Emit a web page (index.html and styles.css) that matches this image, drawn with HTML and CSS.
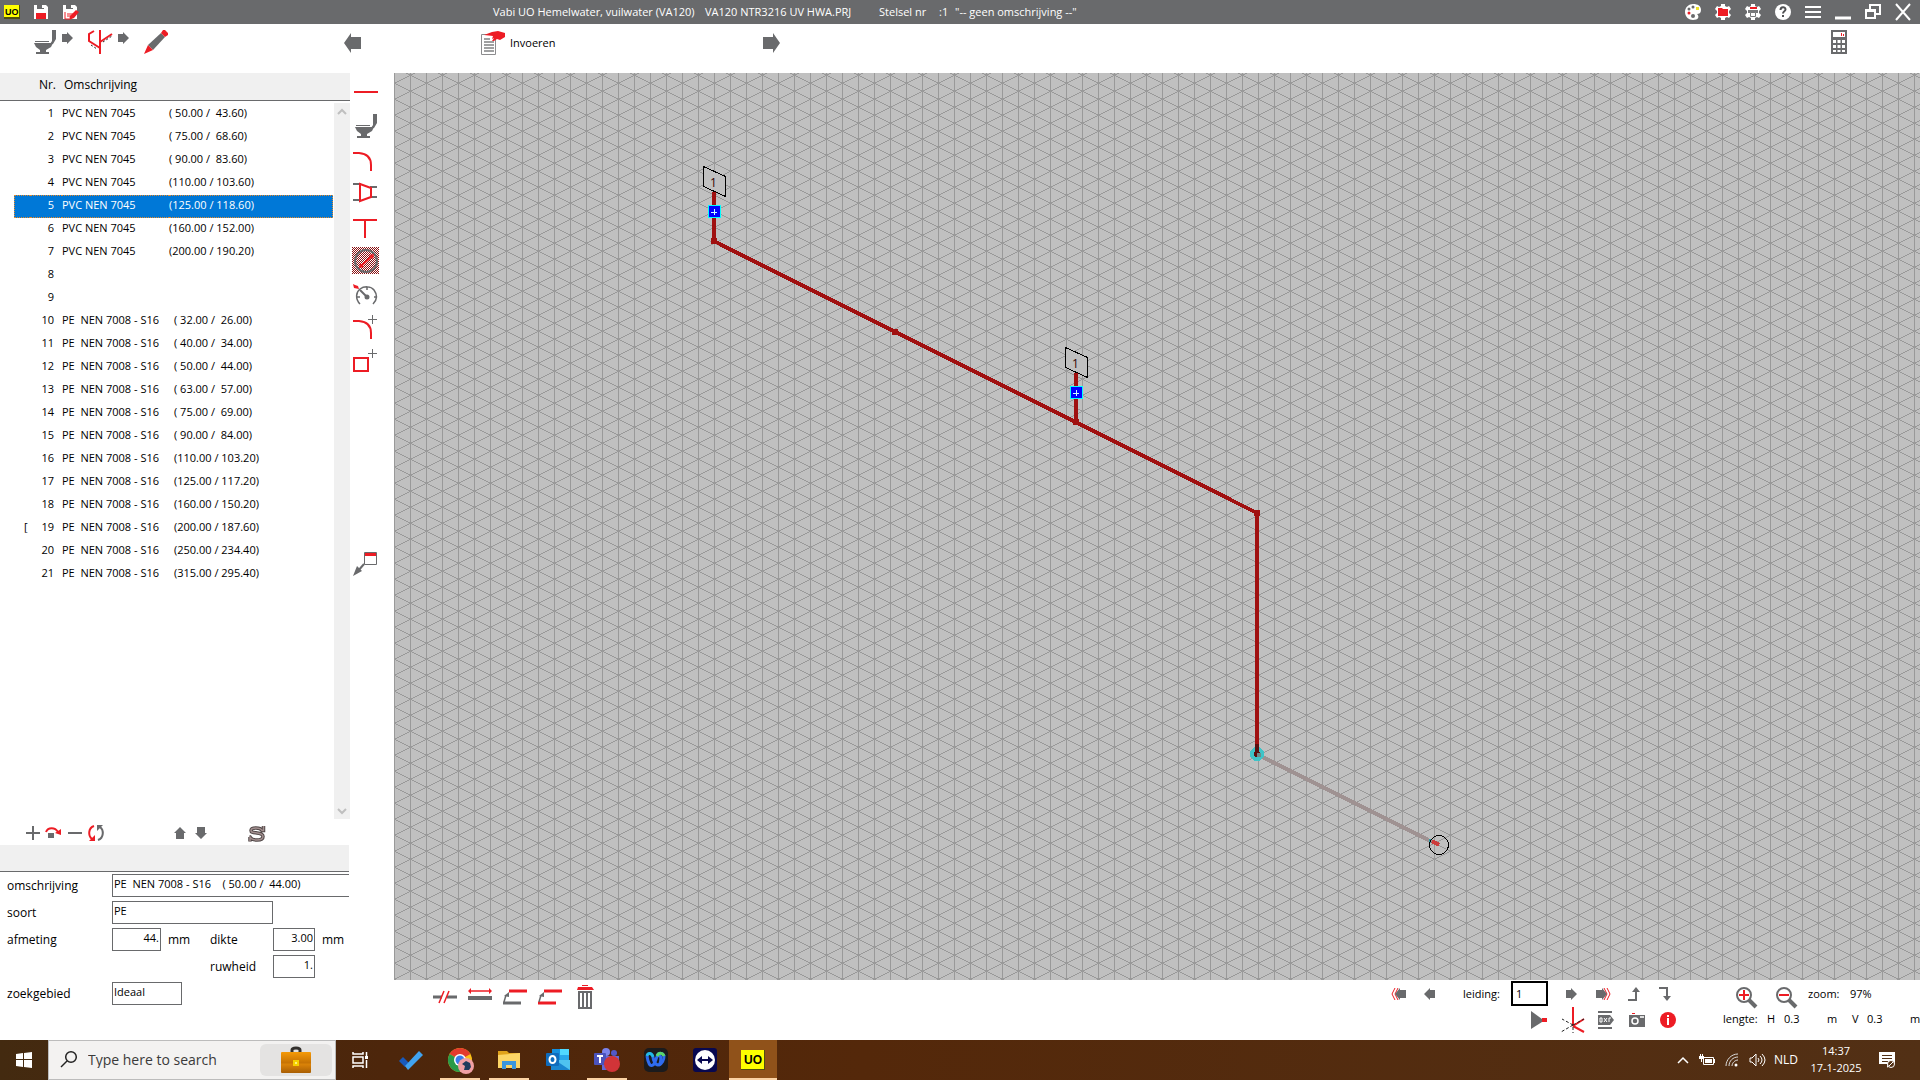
FILE: index.html
```html
<!DOCTYPE html>
<html lang="nl">
<head>
<meta charset="utf-8">
<title>Vabi UO Hemelwater, vuilwater (VA120)</title>
<link rel="stylesheet" href="styles.css">
</head>
<body>
<svg class="defs" width="0" height="0" aria-hidden="true">
  <symbol id="toilet" viewBox="0 0 22 24"><path d="M18 0h4v9l-3 5-3 1v-1l2-3zM1 11h14v1H1zM0 13h19l-2 4-5 3v2h3v2H2v-2h4v-2l-4-3z" fill="#696a6c"/></symbol>
  <symbol id="step" viewBox="0 0 11 12"><path d="M0 2h5V0l6 6-6 6v-2H0z" fill="#696a6c"/></symbol>
  <symbol id="big" viewBox="0 0 17 20"><path d="M0 4h10V0l7 10-7 10v-4H0z" fill="#696a6c"/></symbol>
</svg>

<header class="titlebar">
  <div class="title-left">
    <svg class="uo" width="16" height="14"><rect width="16" height="14" fill="#504f10"/><rect width="15" height="12" fill="#ff0"/><text x="1" y="10" class="uo-text">UO</text></svg>
    <button aria-label="Opslaan"><svg width="16" height="16"><path d="M1 1h3v4h7V1h2l2 2v12H1z" fill="#fff"/><path d="M9 1h2v3H9z" fill="#fff"/><path d="M3 9h10v6H3z" fill="#ed1c24"/></svg></button>
    <button aria-label="Opslaan als"><svg width="18" height="16"><path d="M1 1h3v4h7V1h2l2 2v12H1z" fill="#fff"/><path d="M9 1h2v3H9zM4 9h8v6H4z" fill="#fff"/><path d="M3 8v7h4M5 10h6M5 12h4" stroke="#ed1c24" fill="none"/><path d="M7 16l1-4 6-6 3 2-5 6z" fill="#ed1c24"/></svg></button>
  </div>
  <h1 class="title"><span class="app-name">Vabi UO Hemelwater, vuilwater (VA120)</span><span class="file-name">VA120 NTR3216 UV HWA.PRJ</span><span class="system">Stelsel nr</span><span>:1</span><span>"-- geen omschrijving --"</span></h1>
  <div class="title-right">
    <button aria-label="Kleuren"><svg width="16" height="16"><path d="M8 0c5 0 8 2 8 6 0 3-2 4-4 4 3 3 1 6-4 6-4 0-8-3-8-8s4-8 8-8z" fill="#fff"/><circle cx="4" cy="5" r="1.500" fill="#696a6c"/><circle cx="8" cy="3" r="1.500" fill="#696a6c"/><path d="M11 3h3v3h-3z" fill="#efe12b"/><circle cx="4" cy="9" r="1.500" fill="#ed1c24"/><circle cx="8" cy="12" r="2" fill="#696a6c"/></svg></button>
    <button aria-label="Mapinstellingen"><svg width="16" height="16"><path d="M6 0h4v2l2 1 2-1 2 3-2 2v2l2 2-2 3-2-1-2 1v2H6v-2l-2-1-2 1-2-3 2-2V7L0 5l2-3 2 1 2-1z" fill="#fff"/><path d="M3 4h4l1 1h5v7H3z" fill="#ed1c24"/></svg></button>
    <button aria-label="Printinstellingen"><svg width="16" height="16"><path d="M6 0h4v2l2 1 2-1 2 3-2 2v2l2 2-2 3-2-1-2 1v2H6v-2l-2-1-2 1-2-3 2-2V7L0 5l2-3 2 1 2-1z" fill="#fff"/><path d="M5 3h7v2H5z" fill="#ed1c24"/><path d="M3 6h10v3H3z" fill="#77787a"/><path d="M5.500 8.500h5v4h-5z" fill="#fff" stroke="#77787a"/></svg></button>
    <button aria-label="Help"><svg width="16" height="16"><circle cx="8" cy="8" r="8" fill="#fff"/><path d="M5.500 6c0-3.500 5-3.500 5-.5 0 2-2.500 1.500-2.500 4M8 11v2" fill="none" stroke="#505153" stroke-width="2"/></svg></button>
    <button aria-label="Menu"><svg width="16" height="12"><path d="M0 1h16M0 6h16M0 11h16" stroke="#fff" stroke-width="2"/></svg></button>
    <button aria-label="Minimaliseren"><svg width="16" height="16"><path d="M0 14h16" stroke="#fff" stroke-width="3"/></svg></button>
    <button aria-label="Herstellen"><svg width="16" height="16"><path d="M5 6V1h10v9h-4" stroke="#fff" stroke-width="2" fill="none"/><path d="M1 6h9v8H1zM0 7h11" stroke="#fff" stroke-width="2" fill="none"/></svg></button>
    <button aria-label="Sluiten"><svg width="16" height="16"><path d="M1 0l14 16M15 0L1 16" stroke="#fff" stroke-width="2"/></svg></button>
  </div>
</header>

<nav class="toolbar">
  <div class="steps">
    <button aria-label="Toestellen"><svg width="22" height="24"><use href="#toilet"/></svg></button>
    <svg class="chev" width="11" height="12"><use href="#step"/></svg>
    <button aria-label="Leidingnet"><svg width="24" height="24"><path d="M12 0v24M6 1L1 4v7l11 7M12 12l12-8" fill="none" stroke="#ed1c24" stroke-width="2"/><path d="M3 15l6 4M15 12l9-6" stroke="#222" stroke-dasharray="2 2"/></svg></button>
    <svg class="chev" width="11" height="12"><use href="#step"/></svg>
    <button aria-label="Bewerken"><svg width="24" height="24"><path d="M4 15L17 3l4 4L9 20z" fill="#696a6c"/><path d="M17 3l2-3h2l3 3v2l-3 2zM4 15l5 5-9 4z" fill="#ed1c24"/></svg></button>
  </div>
  <div class="phase">
    <button aria-label="Vorige"><svg class="flip" width="17" height="20"><use href="#big"/></svg></button>
    <button class="phase-name"><svg width="24" height="24"><path d="M.5 3.500h14v20H.5z" fill="#fff" stroke="#8c8c8e"/><path d="M3 8h6M3 11h10M3 14h10M3 17h10M3 20h10" stroke="#808183" stroke-width="1.500"/><path d="M3 4l8-3 6-1 7 2v4l-5 3-3-1-3 2h-2l2-3-2 1 1-3z" fill="#ed1c24"/></svg>Invoeren</button>
    <button aria-label="Volgende"><svg width="17" height="20"><use href="#big"/></svg></button>
  </div>
  <button class="calc" aria-label="Berekenen"><svg width="16" height="24"><path d="M0 0h16v24H0z" fill="#696a6c"/><path d="M2 2h12v5H2zM2 10h3v3H2zM6.500 10h3v3h-3zM11 10h3v3h-3zM2 15h3v3H2zM6.500 15h3v3h-3zM11 15h3v3h-3zM2 20h3v2H2zM6.500 20h3v2h-3zM11 20h3v2h-3z" fill="#fff"/><path d="M10.500 3v3M12.500 4v2" stroke="#ed1c24"/></svg></button>
</nav>

<main class="work">
  <aside class="side">
    <div class="list">
      <table>
        <colgroup><col class="c-pad"><col class="c-mark"><col class="c-nr"><col class="c-type"><col><col class="c-bar"></colgroup>
        <thead><tr><th></th><th></th><th class="nr">Nr.</th><th class="name" colspan="3">Omschrijving</th></tr></thead>
        <tbody>
          <tr><td></td><td></td><td class="nr">1</td><td>PVC NEN 7045</td><td>( 50.00 /&nbsp; 43.60)</td><td></td></tr>
          <tr><td></td><td></td><td class="nr">2</td><td>PVC NEN 7045</td><td>( 75.00 /&nbsp; 68.60)</td><td></td></tr>
          <tr><td></td><td></td><td class="nr">3</td><td>PVC NEN 7045</td><td>( 90.00 /&nbsp; 83.60)</td><td></td></tr>
          <tr><td></td><td></td><td class="nr">4</td><td>PVC NEN 7045</td><td>(110.00 / 103.60)</td><td></td></tr>
          <tr class="selected"><td></td><td></td><td class="nr">5</td><td>PVC NEN 7045</td><td>(125.00 / 118.60)</td><td></td></tr>
          <tr><td></td><td></td><td class="nr">6</td><td>PVC NEN 7045</td><td>(160.00 / 152.00)</td><td></td></tr>
          <tr><td></td><td></td><td class="nr">7</td><td>PVC NEN 7045</td><td>(200.00 / 190.20)</td><td></td></tr>
          <tr><td></td><td></td><td class="nr">8</td><td></td><td></td><td></td></tr>
          <tr><td></td><td></td><td class="nr">9</td><td></td><td></td><td></td></tr>
          <tr class="pe"><td></td><td></td><td class="nr">10</td><td>PE&nbsp; NEN 7008 - S16</td><td>( 32.00 /&nbsp; 26.00)</td><td></td></tr>
          <tr class="pe"><td></td><td></td><td class="nr">11</td><td>PE&nbsp; NEN 7008 - S16</td><td>( 40.00 /&nbsp; 34.00)</td><td></td></tr>
          <tr class="pe"><td></td><td></td><td class="nr">12</td><td>PE&nbsp; NEN 7008 - S16</td><td>( 50.00 /&nbsp; 44.00)</td><td></td></tr>
          <tr class="pe"><td></td><td></td><td class="nr">13</td><td>PE&nbsp; NEN 7008 - S16</td><td>( 63.00 /&nbsp; 57.00)</td><td></td></tr>
          <tr class="pe"><td></td><td></td><td class="nr">14</td><td>PE&nbsp; NEN 7008 - S16</td><td>( 75.00 /&nbsp; 69.00)</td><td></td></tr>
          <tr class="pe"><td></td><td></td><td class="nr">15</td><td>PE&nbsp; NEN 7008 - S16</td><td>( 90.00 /&nbsp; 84.00)</td><td></td></tr>
          <tr class="pe"><td></td><td></td><td class="nr">16</td><td>PE&nbsp; NEN 7008 - S16</td><td>(110.00 / 103.20)</td><td></td></tr>
          <tr class="pe"><td></td><td></td><td class="nr">17</td><td>PE&nbsp; NEN 7008 - S16</td><td>(125.00 / 117.20)</td><td></td></tr>
          <tr class="pe"><td></td><td></td><td class="nr">18</td><td>PE&nbsp; NEN 7008 - S16</td><td>(160.00 / 150.20)</td><td></td></tr>
          <tr class="pe"><td></td><td class="mark">[</td><td class="nr">19</td><td>PE&nbsp; NEN 7008 - S16</td><td>(200.00 / 187.60)</td><td></td></tr>
          <tr class="pe"><td></td><td></td><td class="nr">20</td><td>PE&nbsp; NEN 7008 - S16</td><td>(250.00 / 234.40)</td><td></td></tr>
          <tr class="pe"><td></td><td></td><td class="nr">21</td><td>PE&nbsp; NEN 7008 - S16</td><td>(315.00 / 295.40)</td><td></td></tr>
        </tbody>
      </table>
      <div class="scrollbar">
        <button aria-label="Omhoog"><svg width="8" height="6"><path d="M0 5l4-4 4 4" fill="none" stroke="#bfbfbf" stroke-width="2"/></svg></button>
        <button aria-label="Omlaag"><svg width="8" height="6"><path d="M0 1l4 4 4-4" fill="none" stroke="#bfbfbf" stroke-width="2"/></svg></button>
      </div>
    </div>
    <div class="list-tools">
      <button aria-label="Toevoegen"><svg width="14" height="14"><path d="M0 7h14M7 0v14" stroke="#696a6c" stroke-width="2"/></svg></button>
      <button aria-label="Vervangen"><svg width="16" height="12"><path d="M2 6h6v5H2z" fill="#696a6c"/><path d="M0 5c2-5 9-5 12 0" fill="none" stroke="#ed1c24" stroke-width="2"/><path d="M9 6l6-4v6z" fill="#ed1c24"/></svg></button>
      <button aria-label="Verwijderen"><svg width="14" height="14"><path d="M0 7h14" stroke="#696a6c" stroke-width="2"/></svg></button>
      <button aria-label="Wisselen"><svg width="16" height="16"><path d="M6 1C0 3 0 11 4 14" fill="none" stroke="#ed1c24" stroke-width="2"/><path d="M1 16h6v-6z" fill="#ed1c24"/><path d="M10 15c6-2 6-10 2-13" fill="none" stroke="#696a6c" stroke-width="2"/><path d="M15 0H9v6z" fill="#696a6c"/></svg></button>
      <div class="sort">
        <button aria-label="Naar boven"><svg width="12" height="12"><path d="M6 0l6 6h-2v6H2V6H0z" fill="#696a6c"/></svg></button>
        <button aria-label="Naar beneden"><svg width="12" height="12"><path d="M6 12L0 6h2V0h8v6h2z" fill="#696a6c"/></svg></button>
      </div>
      <button class="sbtn" aria-label="Standaard"><svg width="18" height="17"><path d="M15.500 1v4.500h-1.500c-1-2-3-2.500-6-2.500-3 0-5 .5-5 2.500s2 2 6 2.500 6 1 6 3.500-2 3.500-6 3.500-6-1-7-3H1.500M2 16.500v-4.500" fill="none" stroke="#514848" stroke-width="3.500"/><path d="M15.500 1v4.500h-1.500c-1-2-3-2.500-6-2.500-3 0-5 .5-5 2.500s2 2 6 2.500 6 1 6 3.500-2 3.500-6 3.500-6-1-7-3H1.500M2 16.500v-4.500" fill="none" stroke="#a28f8f" stroke-width="1.500"/></svg></button>
    </div>
    <div class="band"></div>
    <form class="props">
      <label for="oms">omschrijving</label><input id="oms" class="w-full" value="PE&nbsp; NEN 7008 - S16&nbsp; &nbsp; ( 50.00 /&nbsp; 44.00)">
      <label for="srt">soort</label><input id="srt" class="w-kind" value="PE">
      <label for="afm">afmeting</label><div class="pair"><input id="afm" class="w-size num" value="44."><span class="unit">mm</span><label for="dik" class="second">dikte</label><input id="dik" class="w-num num" value="3.00"><span class="unit">mm</span></div>
      <span></span><div class="pair end"><label for="ruw" class="second">ruwheid</label><input id="ruw" class="w-num num" value="1."></div>
      <label for="zoe">zoekgebied</label><input id="zoe" class="w-zone" value="Ideaal">
    </form>
  </aside>

  <div class="parts">
    <button aria-label="Leiding"><svg width="28" height="34"><path d="M2 17h24" stroke="#ed1c24" stroke-width="2"/></svg></button>
    <button aria-label="Toestel"><svg width="28" height="34"><use href="#toilet" x="3" y="5" width="22" height="24"/></svg></button>
    <button aria-label="Bocht"><svg width="28" height="34"><path d="M1 10h6q12 1 12 12v6" fill="none" stroke="#ed1c24" stroke-width="2"/></svg></button>
    <button aria-label="Verloop"><svg width="28" height="34"><path d="M1 7h8M1 23h8M18 10h7M18 20h7" stroke="#696a6c" stroke-width="2"/><path d="M8 7v17l11-4V11z" fill="none" stroke="#ed1c24" stroke-width="2"/></svg></button>
    <button aria-label="T-stuk"><svg width="28" height="34"><path d="M1 9h24M13 9v18" stroke="#ed1c24" stroke-width="2"/></svg></button>
    <button aria-label="Diameter"><svg width="28" height="34"><defs><pattern id="check" width="2" height="2" patternUnits="userSpaceOnUse"><path d="M0 0h1v1H0zM1 1h1v1H1z" fill="#8b1012"/></pattern></defs><path d="M0 2h27v27H0z" fill="url(#check)"/><circle cx="14" cy="16" r="11" fill="none" stroke="#696a6c" stroke-width="2"/><path d="M9 21L20 11" stroke="#ed1c24" stroke-width="2"/><path d="M7 23l1-5 4 4zM22 9l-1 5-4-4z" fill="#ed1c24"/></svg></button>
    <button aria-label="Meter"><svg width="28" height="34"><path d="M8 25c-5-5-4-12 0-15s11-3 14 1 4 9-1 14M15 8v3M5 18h3M22 18h3" fill="none" stroke="#696a6c" stroke-width="1.500"/><path d="M8 11l6 6" stroke="#696a6c" stroke-width="2"/><circle cx="15" cy="18" r="2.500" fill="#696a6c"/><path d="M1 5l2 1 3 1 1 3-5-1z" fill="#ed1c24"/></svg></button>
    <button aria-label="Bocht toevoegen"><svg width="28" height="34"><path d="M1 8h6q12 1 12 12v6" fill="none" stroke="#ed1c24" stroke-width="2"/><path d="M16 6.500h9M20.500 2v9" stroke="#696a6c"/></svg></button>
    <button aria-label="Element toevoegen"><svg width="28" height="34"><path d="M2 11h14v13H2z" fill="none" stroke="#ed1c24" stroke-width="2"/><path d="M16 6.500h9M20.500 2v9" stroke="#696a6c"/></svg></button>
    <button class="label-tool" aria-label="Label plaatsen"><svg width="28" height="34"><path d="M12.500 5.500h12v12h-12z" fill="#fff" stroke="#696a6c"/><path d="M13 6h11v3H13z" fill="#ed1c24"/><path d="M12 17l-6 7" stroke="#696a6c" stroke-width="2"/><path d="M1 29l4-10 5 5z" fill="#696a6c"/></svg></button>
  </div>

  <section class="drawing">
    <svg class="stage">
      <defs><pattern id="iso" width="32" height="16" patternUnits="userSpaceOnUse"><path d="M.5 0v16M16.500 0v16M12 .5h2m0 1h2m0 1h2m0 1h2m0 1h2m0 1h2m0 1h2m0 1h2m0 1h2m0 1h2M0 10.500h2m0 1h2m0 1h2m0 1h2m0 1h2m0 1h2M21 .5h-2m0 1h-2m0 1h-2m0 1h-2m0 1h-2m0 1h-2m0 1h-2m0 1h-2m0 1h-2m0 1h-2m0 1h-1M32 10.500h-1m0 1h-2m0 1h-2m0 1h-2m0 1h-2m0 1h-2" stroke="#999" fill="none" shape-rendering="crispEdges"/></pattern></defs>
      <rect width="100%" height="100%" fill="#c0c0c0"/>
      <rect width="100%" height="100%" fill="url(#iso)"/>
      <g shape-rendering="crispEdges">
        <path d="M863 681L1038 769" stroke="#9f9292" stroke-width="4"/>
        <path d="M320 119v49L863 440v241M682 300v49" fill="none" stroke="#a01010" stroke-width="4"/>
        <circle cx="320" cy="168" r="3.500" fill="#a01010"/><circle cx="501" cy="259" r="3.500" fill="#a01010"/><circle cx="682" cy="349" r="3.500" fill="#a01010"/><circle cx="863" cy="440" r="3.500" fill="#a01010"/>
        <circle cx="863" cy="681" r="5" fill="#5b1010" stroke="#3fc4c8" stroke-width="4"/><path d="M861 671h4v10h-4z" fill="#5b1010"/><circle cx="865" cy="682" r="2.500" fill="#6b8c8c"/>
        <path d="M1038 768l7 4" stroke="#cc3c3c" stroke-width="4"/><path d="M1036 766v4" stroke="#2f9ea8" stroke-width="2"/>
        <circle cx="1045" cy="772" r="9.500" fill="none" stroke="#000"/>
        <g id="tap"><path d="M309.500 93.500l22 10v20l-22-10z" fill="#c0c0c0" stroke="#000"/><path d="M314.500 132.500h12v12h-12z" fill="#00f" stroke="#0ff"/><path d="M317 139.500h6M320.500 136v6" stroke="#cff"/></g>
        <use href="#tap" x="362" y="181"/>
      </g>
      <text x="316" y="114" class="tag">1</text><text x="678" y="295" class="tag">1</text>
    </svg>
    <footer class="controls">
      <div class="edit">
        <button aria-label="Splitsen"><svg width="24" height="24"><path d="M0 12h9M14 12h10" stroke="#696a6c" stroke-width="3"/><path d="M6 18l5-12M11 18l5-12" stroke="#ed1c24" stroke-width="1.500"/></svg></button>
        <button aria-label="Lengte"><svg width="24" height="24"><path d="M0 13h24" stroke="#696a6c" stroke-width="4"/><path d="M1 6h22" stroke="#ed1c24" stroke-width="1.500"/><path d="M0 6l3-3v6zM24 6l-3-3v6z" fill="#ed1c24"/></svg></button>
        <button aria-label="Kopieer eigenschap"><svg width="24" height="24"><path d="M6 6h18" stroke="#ed1c24" stroke-width="3"/><path d="M0 18h18" stroke="#696a6c" stroke-width="3"/><path d="M1 17l2-7" stroke="#696a6c" stroke-width="1.500"/><path d="M1 11l5-4v5z" fill="#696a6c"/></svg></button>
        <button aria-label="Kopieer alles"><svg width="24" height="24"><path d="M6 6h18M0 18h18" stroke="#ed1c24" stroke-width="3"/><path d="M1 17l2-7" stroke="#696a6c" stroke-width="1.500"/><path d="M1 11l5-4v5z" fill="#696a6c"/></svg></button>
        <button aria-label="Wissen"><svg width="24" height="24"><path d="M9 0h6v1H9zM5 2h14l2 3H4z" fill="#ed1c24"/><path d="M6 7h12v16H6zM10 8v15M14 8v15" fill="none" stroke="#696a6c" stroke-width="2"/></svg></button>
      </div>
      <div class="nav">
        <div class="nav-row">
          <button aria-label="Eerste"><svg width="16" height="14"><path d="M4 1L1 7l3 6M7 1L4 7l3 6" fill="none" stroke="#ed1c24"/><path d="M15 3H9V1L4 7l5 6v-2h6z" fill="#696a6c"/></svg></button>
          <button aria-label="Vorige leiding"><svg class="flip" width="11" height="12"><use href="#step"/></svg></button>
          <label for="leiding">leiding:</label><input id="leiding" value="1">
          <button aria-label="Volgende leiding"><svg width="11" height="12"><use href="#step"/></svg></button>
          <button aria-label="Laatste"><svg width="16" height="14"><path d="M12 1l3 6-3 6M9 1l3 6-3 6" fill="none" stroke="#ed1c24"/><path d="M1 3h6V1l5 6-5 6v-2H1z" fill="#696a6c"/></svg></button>
          <button aria-label="Omhoog"><svg width="12" height="14"><path d="M0 13h8V4" fill="none" stroke="#696a6c" stroke-width="2"/><path d="M4 5l4-5 4 5z" fill="#696a6c"/></svg></button>
          <button aria-label="Omlaag"><svg width="12" height="14"><path d="M0 1h8v9" fill="none" stroke="#696a6c" stroke-width="2"/><path d="M4 9l4 5 4-5z" fill="#696a6c"/></svg></button>
        </div>
        <div class="nav-row low">
          <button aria-label="Start"><svg width="16" height="18"><path d="M0 0l11 8v3L0 18z" fill="#696a6c"/><path d="M11 7h5v4h-5z" fill="#ed1c24"/></svg></button>
          <button aria-label="Assen"><svg width="24" height="26"><path d="M12 0v19M12 19l11-7M12 19l11 6" stroke="#ed1c24" stroke-width="2"/><path d="M12 18L1 12M12 18L0 25M12 18l11-6M12 20v6" stroke="#222" stroke-dasharray="3 2"/></svg></button>
          <button aria-label="DXF"><svg width="16" height="18"><path d="M0 1h14M0 17h14" stroke="#696a6c" stroke-width="2"/><path d="M0 4h12l4 5-4 5H0z" fill="#696a6c"/><path d="M2 7v4h2V7zM6 7l3 4M9 7l-3 4M11 11V7h2" fill="none" stroke="#fff"/></svg></button>
          <button aria-label="Foto"><svg width="16" height="14"><path d="M0 2h16v12H0z" fill="#696a6c"/><path d="M3 0h3v1H3z" fill="#ed1c24"/><path d="M11 3h4v2h-4z" fill="#ddd"/><circle cx="6" cy="8" r="3" fill="none" stroke="#fff" stroke-width="1.500"/></svg></button>
          <button aria-label="Informatie"><svg width="16" height="16"><circle cx="8" cy="8" r="8" fill="#ed1c24"/><path d="M7 3h2v2H7zM7 6h2v7H7z" fill="#fff"/></svg></button>
        </div>
      </div>
      <div class="view">
        <div class="view-row">
          <button aria-label="Inzoomen"><svg width="22" height="22"><circle cx="8" cy="8" r="7" fill="#fff" stroke="#696a6c" stroke-width="2"/><path d="M13 13l7 7" stroke="#696a6c" stroke-width="4"/><path d="M3 8h10M8 3v10" stroke="#ed1c24" stroke-width="2"/></svg></button>
          <button aria-label="Uitzoomen"><svg width="22" height="22"><circle cx="8" cy="8" r="7" fill="#fff" stroke="#696a6c" stroke-width="2"/><path d="M13 13l7 7" stroke="#696a6c" stroke-width="4"/><path d="M3 8h10" stroke="#ed1c24" stroke-width="2"/></svg></button>
          <span class="zoom-label">zoom:</span><span>97%</span>
        </div>
        <div class="length-row"><span>lengte:</span><span>H</span><span>0.3</span><span>m</span><span>V</span><span>0.3</span><span>m</span></div>
      </div>
    </footer>
  </section>
</main>

<div class="taskbar">
  <button class="start" aria-label="Start"><svg width="16" height="16"><path d="M0 2l7-1v6H0zM8 1l8-1v7H8zM0 8h7v7l-7-1zM8 8h8v8l-8-1z" fill="#fff"/></svg></button>
  <div class="search">
    <svg width="18" height="18"><circle cx="11" cy="6" r="5.300" fill="none" stroke="#222" stroke-width="1.500"/><path d="M7 10l-6 6" stroke="#222" stroke-width="1.500"/></svg>
    <input aria-label="Zoeken" placeholder="Type here to search">
    <div class="case"><svg width="30" height="26"><defs><linearGradient id="lth" x2="0" y2="1"><stop offset="0" stop-color="#f59a08"/><stop offset=".5" stop-color="#c87404"/><stop offset=".6" stop-color="#d98208"/><stop offset="1" stop-color="#a85e04"/></linearGradient></defs><path d="M11 5V3q0-2 4-2t4 2v2" fill="none" stroke="#33302d" stroke-width="3"/><rect y="5" width="30" height="21" rx="1" fill="url(#lth)"/><path d="M12 13h6v6h-6z" fill="#f5d000"/><path d="M14 15h2v2h-2z" fill="#fff27a"/></svg></div>
  </div>
  <div class="apps">
    <button aria-label="Taakweergave"><svg width="18" height="16"><path d="M1 0v2h10V0M1 16v-2h10v2M1 5h10v6H1zM14.500 0v4M14.500 8v8" fill="none" stroke="#fff" stroke-width="1.500"/><path d="M13 4h3v3h-3z" fill="#fff"/></svg></button>
    <button aria-label="To Do"><svg width="24" height="20"><path d="M0 11l4-4 6 6-4 4z" fill="#185abd"/><path d="M6 16L20 1l4 4L9 20z" fill="#41a3f0"/></svg></button>
    <button class="open" aria-label="Chrome"><svg width="24" height="24"><circle cx="12" cy="12" r="12" fill="#fbc116"/><path d="M12 12L1.600 6A12 12 0 0 1 22.400 6z" fill="#e33b2e"/><path d="M1.600 6A12 12 0 0 0 12 24l5-9-5-3z" fill="#2a9a49"/><circle cx="12" cy="12" r="6" fill="#fff"/><circle cx="12" cy="12" r="4.500" fill="#3a7cec"/><circle cx="18" cy="18" r="8" fill="#f0a0a4"/><path d="M14 16l4-3 4 2 1 4-2 3h-5l1-4z" fill="#1f3b5c"/></svg></button>
    <button class="open" aria-label="Verkenner"><svg width="22" height="18"><path d="M0 0h9l2 2h11v15H0z" fill="#e0a21b"/><path d="M0 4l22-2v15H0z" fill="#fcd566"/><path d="M4 18v-8h14v8h-4v-4H8v4z" fill="#3a96dd"/></svg></button>
    <button aria-label="Outlook"><svg width="24" height="22"><path d="M6 0h17v11H6z" fill="#1490df"/><path d="M14 0h9v6h-9z" fill="#50d9ff"/><path d="M14 6h9v5h-9z" fill="#28a8ea"/><path d="M5 11h19v10H5z" fill="#1a86d0"/><path d="M24 11v10L9 11z" fill="#4fc3f0"/><rect y="4" width="13" height="13" rx="1" fill="#0f6cbd"/><ellipse cx="6.500" cy="10.500" rx="3" ry="3.500" fill="none" stroke="#fff" stroke-width="2"/></svg></button>
    <button class="open" aria-label="Teams"><svg width="26" height="24"><circle cx="12" cy="4" r="4" fill="#7b83eb"/><circle cx="20" cy="5" r="3" fill="#5059c9"/><path d="M8 8h17v8l-7 6H8z" fill="#6268d8"/><rect y="5" width="12" height="12" rx="1" fill="#4b53bc"/><path d="M3 8h6M6 8v7" stroke="#fff" stroke-width="2"/><circle cx="18" cy="16" r="8" fill="#d13438"/></svg></button>
    <button aria-label="Webex"><svg width="24" height="24"><rect width="24" height="24" rx="5" fill="#1b1b1d"/><path d="M3 8c1 7 3 11 6 9s3-10 6-10c3 0 2 10-1 10-3 0-5-6-5-8" fill="none" stroke="#2f6cf0" stroke-width="3"/><path d="M3 8c1-4 5-3 6 1" fill="none" stroke="#22b8e8" stroke-width="3"/><path d="M13 8c2-4 6-3 7 0 0 4-2 8-5 9" fill="none" stroke="#2f6cf0" stroke-width="3"/><path d="M13 8c2-4 6-3 7 0" fill="none" stroke="#5ad86a" stroke-width="3"/></svg></button>
    <button aria-label="TeamViewer"><svg width="24" height="24"><rect width="24" height="24" rx="3" fill="#08084f"/><circle cx="12" cy="12" r="10" fill="#fff"/><path d="M4 12l5-4v3h6V8l5 4-5 4v-3H9v3z" fill="#08084f"/></svg></button>
    <button class="open active" aria-label="Vabi UO"><svg width="24" height="20"><rect width="24" height="20" fill="#504f10"/><rect width="23" height="19" fill="#ff0"/><text x="3" y="14" class="uo-large">UO</text></svg></button>
  </div>
  <div class="tray">
    <svg width="12" height="8"><path d="M1 7l5-5 5 5" fill="none" stroke="#fff" stroke-width="1.500"/></svg>
    <svg width="16" height="12"><path d="M4.500 3.500h10v7h-10z" fill="none" stroke="#fff"/><path d="M6 5h7v4H6zM15 5h1v4h-1zM0 2h5v3H3v3H2V5H0zM1 0h1v2H1zM3 0h1v2H3z" fill="#fff"/></svg>
    <svg width="14" height="14"><path d="M1 13C1 7 6 1 13 1M4 13c0-5 4-9 9-9M7 13c0-3 3-6 6-6" fill="none" stroke="#ddd"/><circle cx="11" cy="12" r="1.500" fill="#fff"/></svg>
    <svg width="17" height="14"><path d="M1 5h2l4-4v12L3 9H1zM9 5q2 2 0 4M11 3q4 4 0 8M13 1q6 6 0 12" fill="none" stroke="#fff"/></svg>
    <span class="lang">NLD</span>
    <div class="clock"><span>14:37</span><span>17-1-2025</span></div>
    <svg class="note" width="17" height="17"><path d="M0 0h16v12h-5l-3 4v-4H0z" fill="#fff"/><path d="M3 3.500h10M3 6.500h10M3 9.500h6" stroke="#523015"/><circle cx="12" cy="12" r="3.500" fill="#523015" stroke="#fff"/><path d="M10 14l4-4" stroke="#fff"/></svg>
  </div>
</div>
</body>
</html>
```
FILE: styles.css
```css
* { box-sizing: border-box; }
body {
  margin: 0;
  min-height: 100vh;
  display: flex;
  flex-direction: column;
  background: #fff;
  color: #000;
  font: 11px/16px "Open Sans", "Noto Sans", sans-serif;
  overflow-x: hidden;
}
svg { display: block; flex: none; overflow: visible; }
.defs { position: absolute; }
button {
  display: flex;
  align-items: center;
  justify-content: center;
  border: 0;
  padding: 0;
  background: none;
  color: inherit;
  font: inherit;
}
input { font: inherit; color: inherit; min-width: 0; }
.flip { transform: scaleX(-1); }

/* Title bar */
.titlebar { height: 24px; display: flex; align-items: center; background: #696a6c; color: #fff; }
.title-left { width: 493px; padding-left: 4px; display: flex; align-items: center; gap: 13px; }
.title { flex: 1; display: flex; margin: 0; font-size: 11px; font-weight: 400; white-space: nowrap; line-height: 22px; }
.app-name { width: 212px; }
.file-name { width: 174px; }
.title .system { width: 60px; }
.title .system + span { width: 16px; }
.title-right { display: flex; padding-right: 2px; }
.title-right button { width: 30px; height: 24px; }
.uo-text { font: 700 9px "Liberation Sans", sans-serif; }
.uo-large { font: 700 12px "Liberation Sans", sans-serif; }

/* Main toolbar */
.toolbar { height: 49px; display: flex; padding: 6px 73px 0 34px; }
.steps { width: 310px; height: 24px; display: flex; gap: 6px; }
.steps button:nth-of-type(n+2) { margin: 0 0 0 9px; }
.chev { margin-top: 2px; }
.phase { flex: 1; display: flex; align-items: center; height: 25px; }
.phase-name { gap: 5px; width: 282px; margin: 0 0 0 120px; justify-content: flex-start; }
.calc { height: 24px; }

/* Work area */
.work { flex: 1; display: flex; min-height: 0; }
.side { width: 350px; flex: none; display: flex; flex-direction: column; }
.list { flex: 1; position: relative; }
table { width: 100%; table-layout: fixed; border-spacing: 0; }
.c-pad { width: 14px; }
.c-mark { width: 16px; }
.c-nr { width: 32px; }
.c-type { width: 107px; }
.c-bar { width: 17px; }
th { height: 30px; padding: 0 0 6px; font-size: 12px; font-weight: 400; text-align: left; background: linear-gradient(#f0f0f0 27px, #696a6c 27px, #696a6c 28px, #fff 28px); }
th.name { padding-left: 2px; }
td { height: 23px; padding: 0 0 4px; white-space: nowrap; }
.nr { text-align: right; padding-right: 8px; }
th.nr { padding-right: 6px; }
.mark { padding-left: 10px; }
.pe td:nth-child(5) { padding-left: 5px; }
.selected td:nth-child(n+2):nth-child(-n+5) { background: #0078d7; color: #fff; border: 1px dotted #e88a28; border-width: 1px 0; padding-bottom: 3px; }
.selected td:nth-child(2) { border-left-width: 1px !important; }
.selected td:nth-child(5) { border-right-width: 1px !important; }
.scrollbar { position: absolute; top: 30px; right: 0; bottom: 0; width: 16px; display: flex; flex-direction: column; justify-content: space-between; background: #f0f0f0; }
.scrollbar button { height: 17px; }
.list-tools { height: 26px; display: flex; align-items: center; gap: 6px; padding: 2px 0 0 26px; }
.sort { display: flex; gap: 9px; margin-left: 64px; }
.sbtn { margin-left: 35px; }
.band { height: 27px; background: #f0f0f0; border-bottom: 1px solid #696a6c; margin-right: 1px; }
.props { height: 168px; display: grid; grid-template-columns: 105px 1fr; grid-auto-rows: 23px; gap: 4px 0; align-items: center; padding: 2px 0 0 7px; font-size: 12px; }
.props input { height: 23px; border: 1px solid #696a6c; padding: 0 1px 4px; background: #fff; font-size: 11px; }
.props .num { text-align: right; }
.props .w-full { width: 237px; border-right: 0; }
.w-kind { width: 161px; }
.w-size { width: 49px; }
.w-num { width: 42px; }
.w-zone { width: 70px; }
.pair { display: flex; align-items: center; }
.pair.end { padding-left: 98px; }
.unit { width: 28px; margin-left: 7px; }
.pair .unit + .second { margin-left: 14px; }
.second { width: 63px; }
.parts { width: 44px; flex: none; padding: 2px 0 0 2px; }
.parts .label-tool { margin-top: 166px; }

/* Drawing */
.drawing { flex: 1; min-width: 0; display: flex; flex-direction: column; }
.stage { flex: 1; width: 100%; overflow: hidden; }
.tag { font-size: 12px; fill: #300; }
.controls { height: 60px; display: flex; }
.edit { display: flex; gap: 11px; padding: 5px 0 0 39px; height: 29px; flex: 1; }
.nav { width: 302px; margin-right: 50px; padding-top: 1px; display: flex; flex-direction: column; }
.nav-row { display: flex; align-items: center; height: 25px; }
.nav-row button { width: 31px; height: 22px; }
.nav-row label { width: 48px; margin-left: 18px; }
.nav-row input { width: 37px; height: 25px; border: 2px solid #000; padding: 0 3px; margin-right: 8px; }
.nav-row.low { justify-content: flex-end; height: 28px; padding-right: 2px; }
.nav-row.low button:nth-child(-n+2) { width: 34px; }
.view { width: 185px; padding-top: 6px; white-space: nowrap; }
.view-row { display: flex; gap: 18px; height: 23px; padding-left: 1px; }
.view-row .zoom-label { width: 32px; margin: 0 -8px 0 -8px; }
.length-row { display: grid; grid-template-columns: 44px 17px 43px 25px 15px 43px 10px; line-height: 20px; margin-left: -12px; }

/* Taskbar */
.taskbar { height: 40px; display: flex; background: linear-gradient(90deg, #432a10, #4d260b 20%, #54280a 45%, #523015); color: #fff; }
.start { width: 48px; }
.search { width: 288px; display: flex; align-items: center; padding: 0 3px 0 11px; background: #f3f2f1; border: 1px solid #bcbcbc; }
.search input { flex: 1; border: 0; background: none; font-size: 14px; padding: 0 0 0 10px; }
.search input::placeholder { color: #3a3a3a; opacity: 1; }
.case { width: 72px; height: 32px; display: flex; align-items: center; justify-content: center; background: #e4e3e2; border-radius: 6px; }
.apps { flex: 1; display: flex; }
.apps button { width: 49px; }
.apps button:first-child { width: 50px; }
.open { background: linear-gradient(#fcd3a4, #fcd3a4) center bottom / 40px 2px no-repeat; }
.apps .active { width: 48px; background: linear-gradient(#fcd3a4, #fcd3a4) center bottom / 48px 2px no-repeat, #90521a; }
.tray { display: flex; align-items: center; gap: 10px; padding-right: 24px; }
.lang { width: 24px; margin-left: -2px; font-size: 12px; }
.clock { width: 56px; display: flex; flex-direction: column; align-items: center; line-height: 17px; padding-bottom: 2px; }
.note { margin-left: 5px; }
```
